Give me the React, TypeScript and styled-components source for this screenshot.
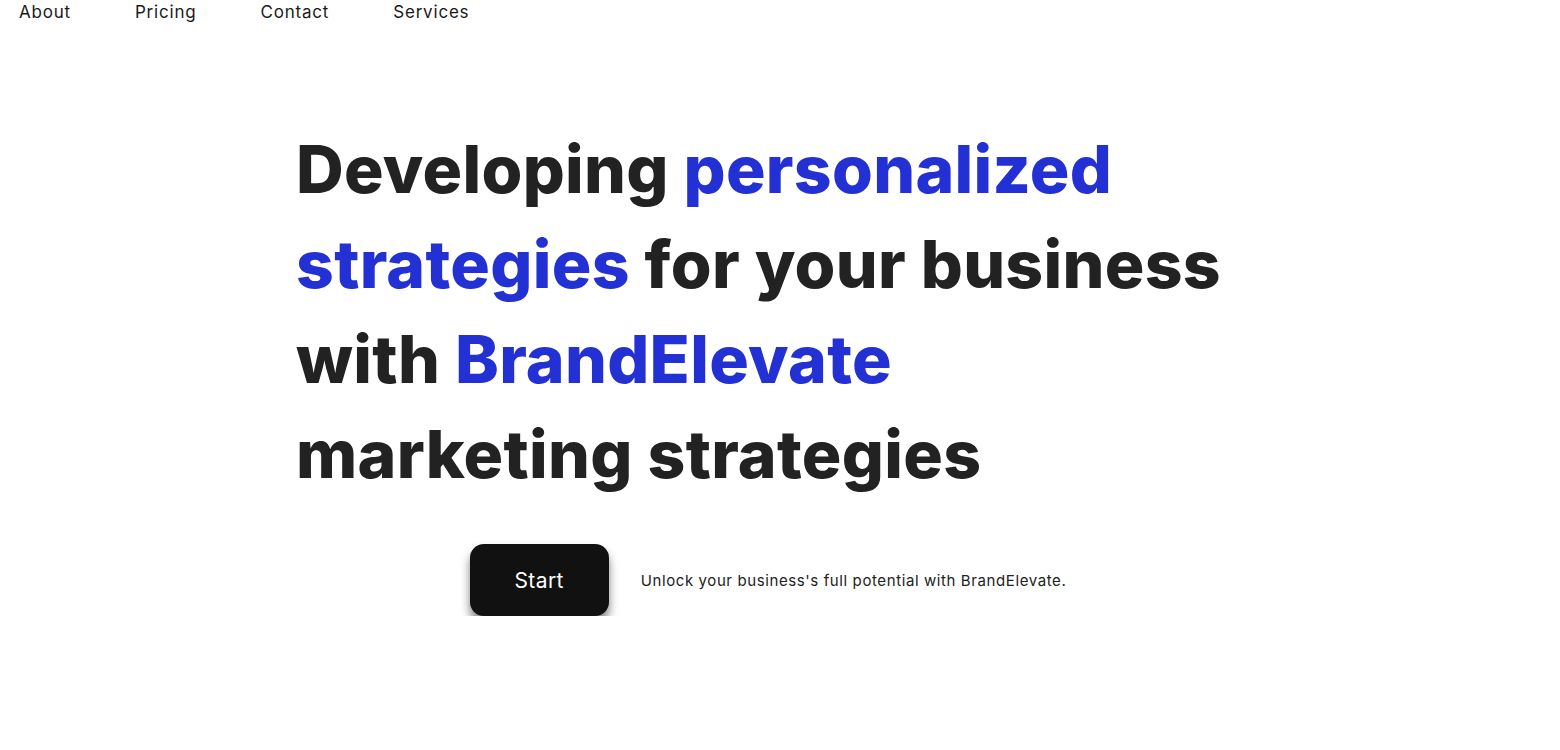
import styled, { createGlobalStyle } from "styled-components";

const Global = createGlobalStyle`
  body {
    margin: 0;
    background: #fff;
    font-family: Inter, "Noto Sans", sans-serif;
    color: #222;
  }
`;

const Nav = styled.nav`
  display: flex;
  column-gap: 64px;
  padding: 0 19px;
  height: 24px;
  align-items: center;
`;

const NavLink = styled.a`
  font-size: 17px;
  letter-spacing: 0.8px;
  color: #1a1a1a;
  text-decoration: none;
  cursor: pointer;
`;

const Hero = styled.section`
  width: 944px;
  margin: 0 0 0 296px;
  padding-top: 98px;
`;

const Heading = styled.h1`
  margin: 0;
  font-size: 66px;
  font-weight: 800;
  line-height: 95px;
  letter-spacing: 0.3px;
  color: #222;
`;

const Accent = styled.span`
  color: #2330d4;
`;

const Actions = styled.div`
  display: flex;
  justify-content: center;
  align-items: center;
  column-gap: 32px;
  margin-top: 42px;
`;

const StartButton = styled.button`
  width: 139px;
  height: 72px;
  border: none;
  border-radius: 14px;
  background: #111;
  color: #fff;
  font-family: inherit;
  font-size: 21px;
  letter-spacing: 0.4px;
  box-shadow: 0 7px 10px rgba(0, 0, 0, 0.5);
  cursor: pointer;
`;

const Tagline = styled.p`
  margin: 0;
  font-size: 15px;
  letter-spacing: 0.6px;
  color: #222;
`;

function App() {
  return (
    <>
      <Global />
      <Nav>
        <NavLink>About</NavLink>
        <NavLink>Pricing</NavLink>
        <NavLink>Contact</NavLink>
        <NavLink>Services</NavLink>
      </Nav>
      <Hero>
        <Heading>
          Developing <Accent>personalized</Accent>
          <br />
          <Accent>strategies</Accent> for your business
          <br />
          with <Accent>BrandElevate</Accent>
          <br />
          marketing strategies
        </Heading>
        <Actions>
          <StartButton>Start</StartButton>
          <Tagline>Unlock your business's full potential with BrandElevate.</Tagline>
        </Actions>
      </Hero>
    </>
  );
}

export default App;
